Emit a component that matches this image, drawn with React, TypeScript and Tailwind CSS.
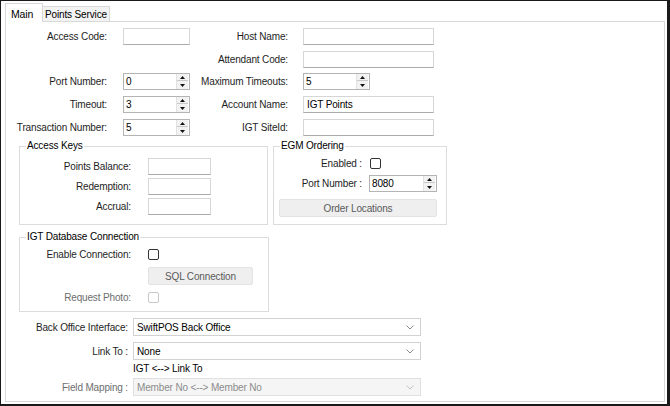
import React from "react";

function TextBox({ w, value }: { w: string; value?: string }) {
  return (
    <div className={`${w} h-[17px] bg-white border border-[#d6d6d6] border-b-[#ababab] flex items-center pl-[3px] text-black`}>
      {value}
    </div>
  );
}

function Spin({ w, value }: { w: string; value: string }) {
  return (
    <div className={`${w} h-[17px] bg-white border border-[#b4b4b4] flex items-center text-black`}>
      <span className="flex-1 pl-[2px]">{value}</span>
      <div className="w-[12px] h-[15px] mr-px flex flex-col border-l border-[#e2e2e2]">
        <div className="h-[7px] flex items-center justify-center bg-[#f2f2f2] border-b border-[#c9c9c9]">
          <svg width="5" height="3" viewBox="0 0 5 3"><polygon points="0,3 5,3 2.5,0" fill="#111" /></svg>
        </div>
        <div className="h-[8px] flex items-center justify-center bg-[#f2f2f2]">
          <svg width="5" height="3" viewBox="0 0 5 3"><polygon points="0,0 5,0 2.5,3" fill="#111" /></svg>
        </div>
      </div>
    </div>
  );
}

function Check({ disabled }: { disabled?: boolean }) {
  return (
    <div className={`w-[11px] h-[11px] rounded-[2px] bg-white border ${disabled ? "border-[#c8c8c8]" : "border-[#333333]"}`} />
  );
}

function Combo({ value, disabled }: { value: string; disabled?: boolean }) {
  return (
    <div className={`w-[288px] h-[18px] border flex items-center pl-[3px] pr-[6px] ${disabled ? "bg-[#f5f5f5] border-[#e0e0e0] text-[#8c8c8c]" : "bg-white border-[#d2d2d2] text-black"}`}>
      <span className="flex-1">{value}</span>
      <svg width="8" height="5" viewBox="0 0 8 5">
        <polyline points="0.5,0.5 4,4 7.5,0.5" fill="none" stroke={disabled ? "#c4c4c4" : "#8a8a8a"} strokeWidth="1" />
      </svg>
    </div>
  );
}

function Group({ title, className, children }: { title: string; className: string; children: React.ReactNode }) {
  return (
    <div className={`relative border border-[#dcdcdc] ${className}`}>
      <span className="absolute -top-[8px] left-[6px] bg-white px-[1px] leading-[14px] text-black">{title}</span>
      {children}
    </div>
  );
}

function Button({ w, label }: { w: string; label: string }) {
  return (
    <div className={`${w} h-[18px] rounded-[2px] bg-[#efefef] border border-[#e3e3e3] flex items-center justify-center text-[#5a5a5a]`}>
      {label}
    </div>
  );
}

export default function App() {
  return (
    <div className="w-[670px] h-[406px] bg-white border-t border-l border-r-[3px] border-b-[2px] border-[#1a1a1a] overflow-hidden font-['Liberation_Sans',Arial,sans-serif] text-[10px] tracking-[-0.15px] text-[#1e1e1e]">
      <div className="flex items-end pl-[4px] pt-[2px]">
        <div className="relative z-10 -mb-px w-[38px] h-[19px] bg-white border-t border-l border-r border-[#d9d9d9] pl-[5px] pt-[3px] text-black text-[10.5px]">
          Main
        </div>
        <div className="w-[67px] h-[15px] bg-[#f3f3f3] border-t border-r border-[#d9d9d9] flex items-center justify-center text-black">
          Points Service
        </div>
      </div>
      <div className="ml-[4px] w-[660px] h-[381px] border border-[#d9d9d9] bg-white">
        {/* top fields */}
        <div className="pt-[6px]">
          <div className="flex items-center h-[17px]">
            <span className="w-[101px] text-right">Access Code:</span>
            <div className="ml-[16px]"><TextBox w="w-[67px]" /></div>
            <span className="w-[98px] text-right">Host Name:</span>
            <div className="ml-[15px]"><TextBox w="w-[131px]" /></div>
          </div>
          <div className="flex items-center h-[17px] mt-[6px]">
            <span className="w-[101px]" />
            <div className="ml-[16px] w-[67px]" />
            <span className="w-[98px] text-right">Attendant Code:</span>
            <div className="ml-[15px]"><TextBox w="w-[131px]" /></div>
          </div>
          <div className="flex items-center h-[17px] mt-[5px]">
            <span className="w-[101px] text-right">Port Number:</span>
            <div className="ml-[16px]"><Spin w="w-[67px]" value="0" /></div>
            <span className="w-[98px] text-right -mr-[4px] whitespace-nowrap">Maximum Timeouts:</span>
            <div className="ml-[19px]"><Spin w="w-[67px]" value="5" /></div>
          </div>
          <div className="flex items-center h-[17px] mt-[6px]">
            <span className="w-[101px] text-right">Timeout:</span>
            <div className="ml-[16px]"><Spin w="w-[67px]" value="3" /></div>
            <span className="w-[98px] text-right">Account Name:</span>
            <div className="ml-[15px]"><TextBox w="w-[131px]" value="IGT Points" /></div>
          </div>
          <div className="flex items-center h-[17px] mt-[6px]">
            <span className="w-[101px] text-right whitespace-nowrap">Transaction Number:</span>
            <div className="ml-[16px]"><Spin w="w-[67px]" value="5" /></div>
            <span className="w-[98px] text-right">IGT SiteId:</span>
            <div className="ml-[15px]"><TextBox w="w-[131px]" /></div>
          </div>
        </div>

        {/* groups row */}
        <div className="flex mt-[10px] ml-[13px]">
          <Group title="Access Keys" className="w-[249px] h-[79px] pt-[11px]">
            <div className="flex flex-col gap-[3px]">
              <div className="flex items-center h-[17px]">
                <span className="w-[111px] text-right">Points Balance:</span>
                <div className="ml-[17px]"><TextBox w="w-[63px]" /></div>
              </div>
              <div className="flex items-center h-[17px]">
                <span className="w-[111px] text-right">Redemption:</span>
                <div className="ml-[17px]"><TextBox w="w-[63px]" /></div>
              </div>
              <div className="flex items-center h-[17px]">
                <span className="w-[111px] text-right">Accrual:</span>
                <div className="ml-[17px]"><TextBox w="w-[63px]" /></div>
              </div>
            </div>
          </Group>
          <Group title="EGM Ordering" className="ml-[5px] w-[174px] h-[79px] pt-[10px]">
            <div className="flex items-center h-[12px]">
              <span className="w-[88px] text-right">Enabled :</span>
              <div className="ml-[8px]"><Check /></div>
            </div>
            <div className="flex items-center h-[17px] mt-[6px]">
              <span className="w-[88px] text-right">Port Number :</span>
              <div className="ml-[7px]"><Spin w="w-[68px]" value="8080" /></div>
            </div>
            <div className="mt-[7px] ml-[5px]">
              <Button w="w-[158px]" label="Order Locations" />
            </div>
          </Group>
        </div>

        {/* IGT DB */}
        <div className="mt-[12px] ml-[13px]">
          <Group title="IGT Database Connection" className="w-[250px] h-[75px] pt-[10px]">
            <div className="flex items-center h-[12px]">
              <span className="w-[111px] text-right">Enable Connection:</span>
              <div className="ml-[17px]"><Check /></div>
            </div>
            <div className="mt-[7px] ml-[128px]">
              <Button w="w-[105px]" label="SQL Connection" />
            </div>
            <div className="flex items-center h-[12px] mt-[6px]">
              <span className="w-[111px] text-right text-[#6e6e6e]">Request Photo:</span>
              <div className="ml-[17px]"><Check disabled /></div>
            </div>
          </Group>
        </div>

        {/* bottom combos */}
        <div className="mt-[6px]">
          <div className="flex items-center h-[18px]">
            <span className="w-[122px] text-right">Back Office Interface:</span>
            <div className="ml-[5px]"><Combo value="SwiftPOS Back Office" /></div>
          </div>
          <div className="flex items-center h-[18px] mt-[6px]">
            <span className="w-[122px] text-right">Link To :</span>
            <div className="ml-[5px]"><Combo value="None" /></div>
          </div>
          <div className="h-[14px] mt-px pl-[127px] flex items-center text-black">IGT &lt;--&gt; Link To</div>
          <div className="flex items-center h-[18px] mt-[3px]">
            <span className="w-[122px] text-right text-[#6e6e6e]">Field Mapping :</span>
            <div className="ml-[5px]"><Combo value="Member No <--> Member No" disabled /></div>
          </div>
        </div>
      </div>
    </div>
  );
}
